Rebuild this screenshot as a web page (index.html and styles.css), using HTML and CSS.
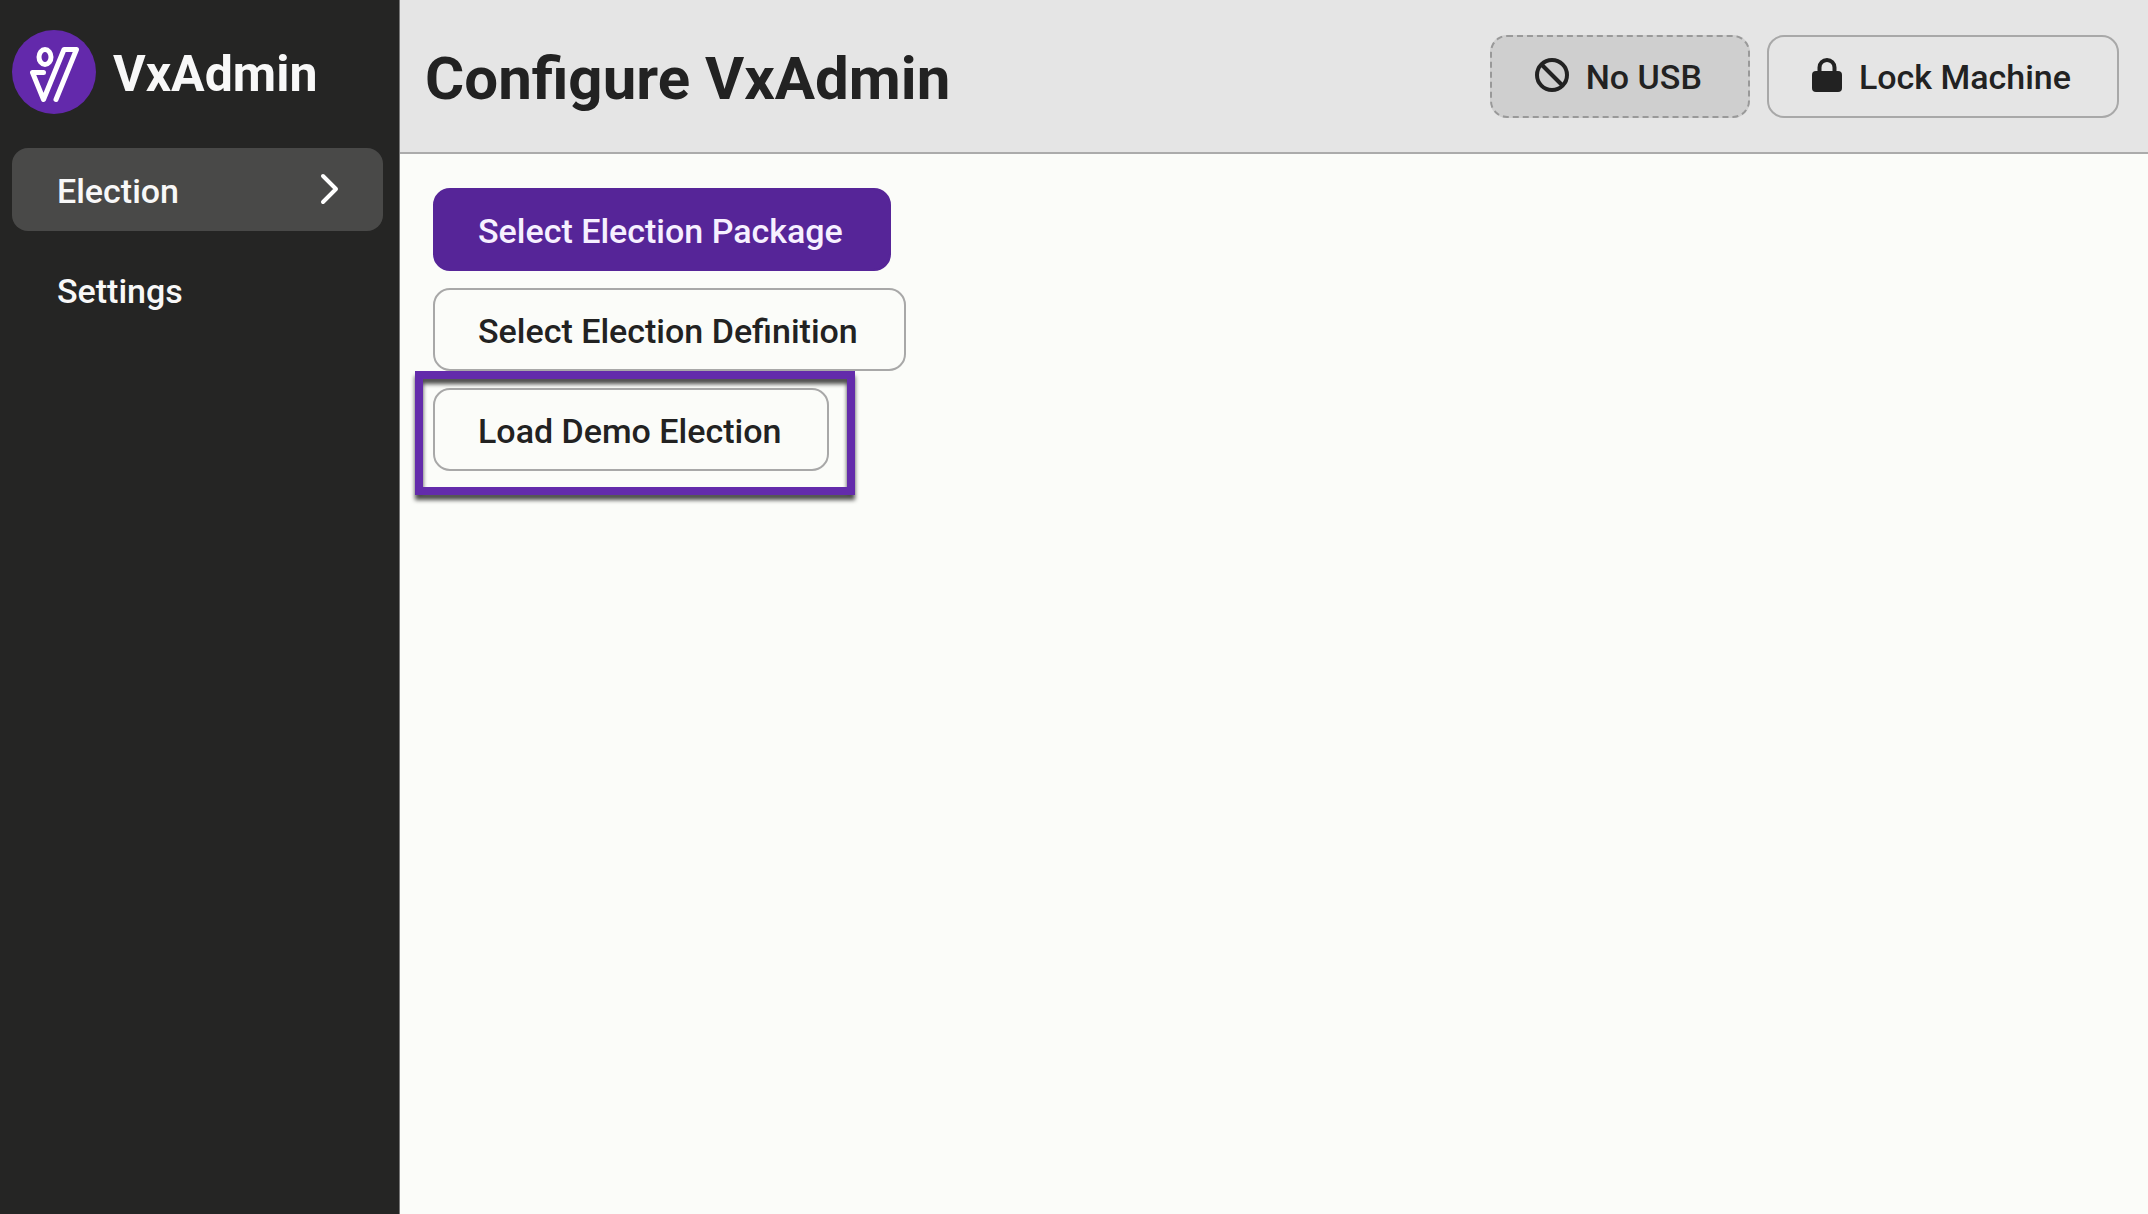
FILE: index.html
```html
<!DOCTYPE html>
<html lang="en">
<head>
<meta charset="utf-8">
<meta name="viewport" content="width=device-width, initial-scale=1">
<title>VxAdmin</title>
<link rel="stylesheet" href="styles.css">
</head>
<body>
<div class="app">
  <aside class="sidebar">
    <div class="brand">
      <svg class="brand-logo" viewBox="0 0 84 84" aria-hidden="true">
        <circle cx="42" cy="42" r="42" fill="#6329ab"/>
        <g fill="none" stroke="#fff" stroke-width="5" stroke-linecap="round" stroke-linejoin="round">
          <ellipse cx="33" cy="27" rx="6" ry="7.500"/>
          <path d="M31.500 42.500H20.500L31.500 69.500L52 19.500H64.500L44 69.500"/>
        </g>
      </svg>
      <span class="brand-name">VxAdmin</span>
    </div>
    <nav class="nav">
      <a class="nav-link nav-link-active" href="#election" aria-current="page">
        <span>Election</span>
        <svg class="nav-chevron" viewBox="0 0 20 32" aria-hidden="true"><path d="M3 3L16 16L3 29" fill="none" stroke="#fff" stroke-width="4" stroke-linecap="round" stroke-linejoin="round"/></svg>
      </a>
      <a class="nav-link" href="#settings">Settings</a>
    </nav>
  </aside>
  <div class="page">
    <header class="header">
      <h1 class="title">Configure VxAdmin</h1>
      <div class="toolbar">
        <button class="button button-disabled" type="button" disabled>
          <svg class="icon-ban" viewBox="0 0 34 34" aria-hidden="true"><g fill="none" stroke="#222" stroke-width="4"><circle cx="17" cy="17" r="15"/><path d="M6.500 6.500L27.500 27.500"/></g></svg>
          <span>No USB</span>
        </button>
        <button class="button" type="button">
          <svg class="icon-lock" viewBox="0 0 30 34" aria-hidden="true"><rect y="13" width="30" height="21" rx="4" fill="#222"/><path d="M7.500 14V9.500a7.500 7.500 0 0 1 15 0V14" fill="none" stroke="#222" stroke-width="4"/></svg>
          <span>Lock Machine</span>
        </button>
      </div>
    </header>
    <main class="content">
      <button class="button button-primary" type="button">Select Election Package</button>
      <button class="button" type="button">Select Election Definition</button>
      <div class="callout">
        <button class="button" type="button">Load Demo Election</button>
        <span class="callout-frame"></span>
      </div>
    </main>
  </div>
</div>
</body>
</html>
```
FILE: styles.css
```css
* {
  box-sizing: border-box;
}

body {
  margin: 0;
  background: #fbfcf9;
  color: #222;
  font-family: Roboto, "Liberation Sans", sans-serif;
  font-size: 34px;
  line-height: 40px;
}

.app {
  display: flex;
  min-height: 100vh;
}

.sidebar {
  flex: 0 0 400px;
  padding: 30px 16px 0 12px;
  background: #252524;
  color: #f8f8f8;
  border-right: 1px solid #777;
}

.brand {
  display: flex;
  align-items: center;
  gap: 17px;
  margin-bottom: 34px;
}

.brand-logo {
  width: 84px;
  height: 84px;
}

.brand-name {
  padding-top: 4px;
  font-size: 50px;
  line-height: 60px;
  font-weight: 700;
}

.nav {
  display: flex;
  flex-direction: column;
  gap: 17px;
}

.nav-link {
  display: flex;
  align-items: center;
  justify-content: space-between;
  height: 83px;
  padding: 2px 43px 0 45px;
  border-radius: 16px;
  color: inherit;
  font-weight: 500;
  text-decoration: none;
}

.nav-link-active {
  background: #494948;
}

.nav-chevron {
  width: 20px;
  height: 32px;
  margin-bottom: 4px;
}

.page {
  flex: 1;
  min-width: 0;
}

.header {
  display: flex;
  align-items: center;
  justify-content: space-between;
  height: 154px;
  padding: 0 29px 0 25px;
  background: #e5e5e5;
  border-bottom: 2px solid #ababab;
}

.title {
  margin: 0;
  padding-top: 5px;
  font-size: 60px;
  line-height: 72px;
  font-weight: 700;
}

.toolbar {
  display: flex;
  gap: 17px;
}

.button {
  display: flex;
  align-items: center;
  gap: 17px;
  height: 83px;
  padding: 2px 46px 0 43px;
  border: 2px solid #a8a8a8;
  border-radius: 17px;
  background: transparent;
  color: #222;
  font: inherit;
  font-weight: 500;
}

.button svg {
  margin-bottom: 4px;
}

.button-disabled {
  border-style: dashed;
  border-color: #999;
  background: #cfcfcf;
}

.button-primary {
  border-color: #562598;
  background: #562598;
  color: #f6f0ff;
}

.icon-ban {
  width: 34px;
  height: 34px;
}

.icon-lock {
  width: 30px;
  height: 34px;
}

.content {
  display: flex;
  flex-direction: column;
  align-items: flex-start;
  gap: 17px;
  padding: 34px 33px;
}

.callout {
  position: relative;
}

.callout-frame {
  position: absolute;
  inset: -17px -26px -24px -18px;
  border: 8px solid #632bab;
  filter: drop-shadow(0 5px 2px rgba(0, 0, 0, 0.7));
  pointer-events: none;
}
```
